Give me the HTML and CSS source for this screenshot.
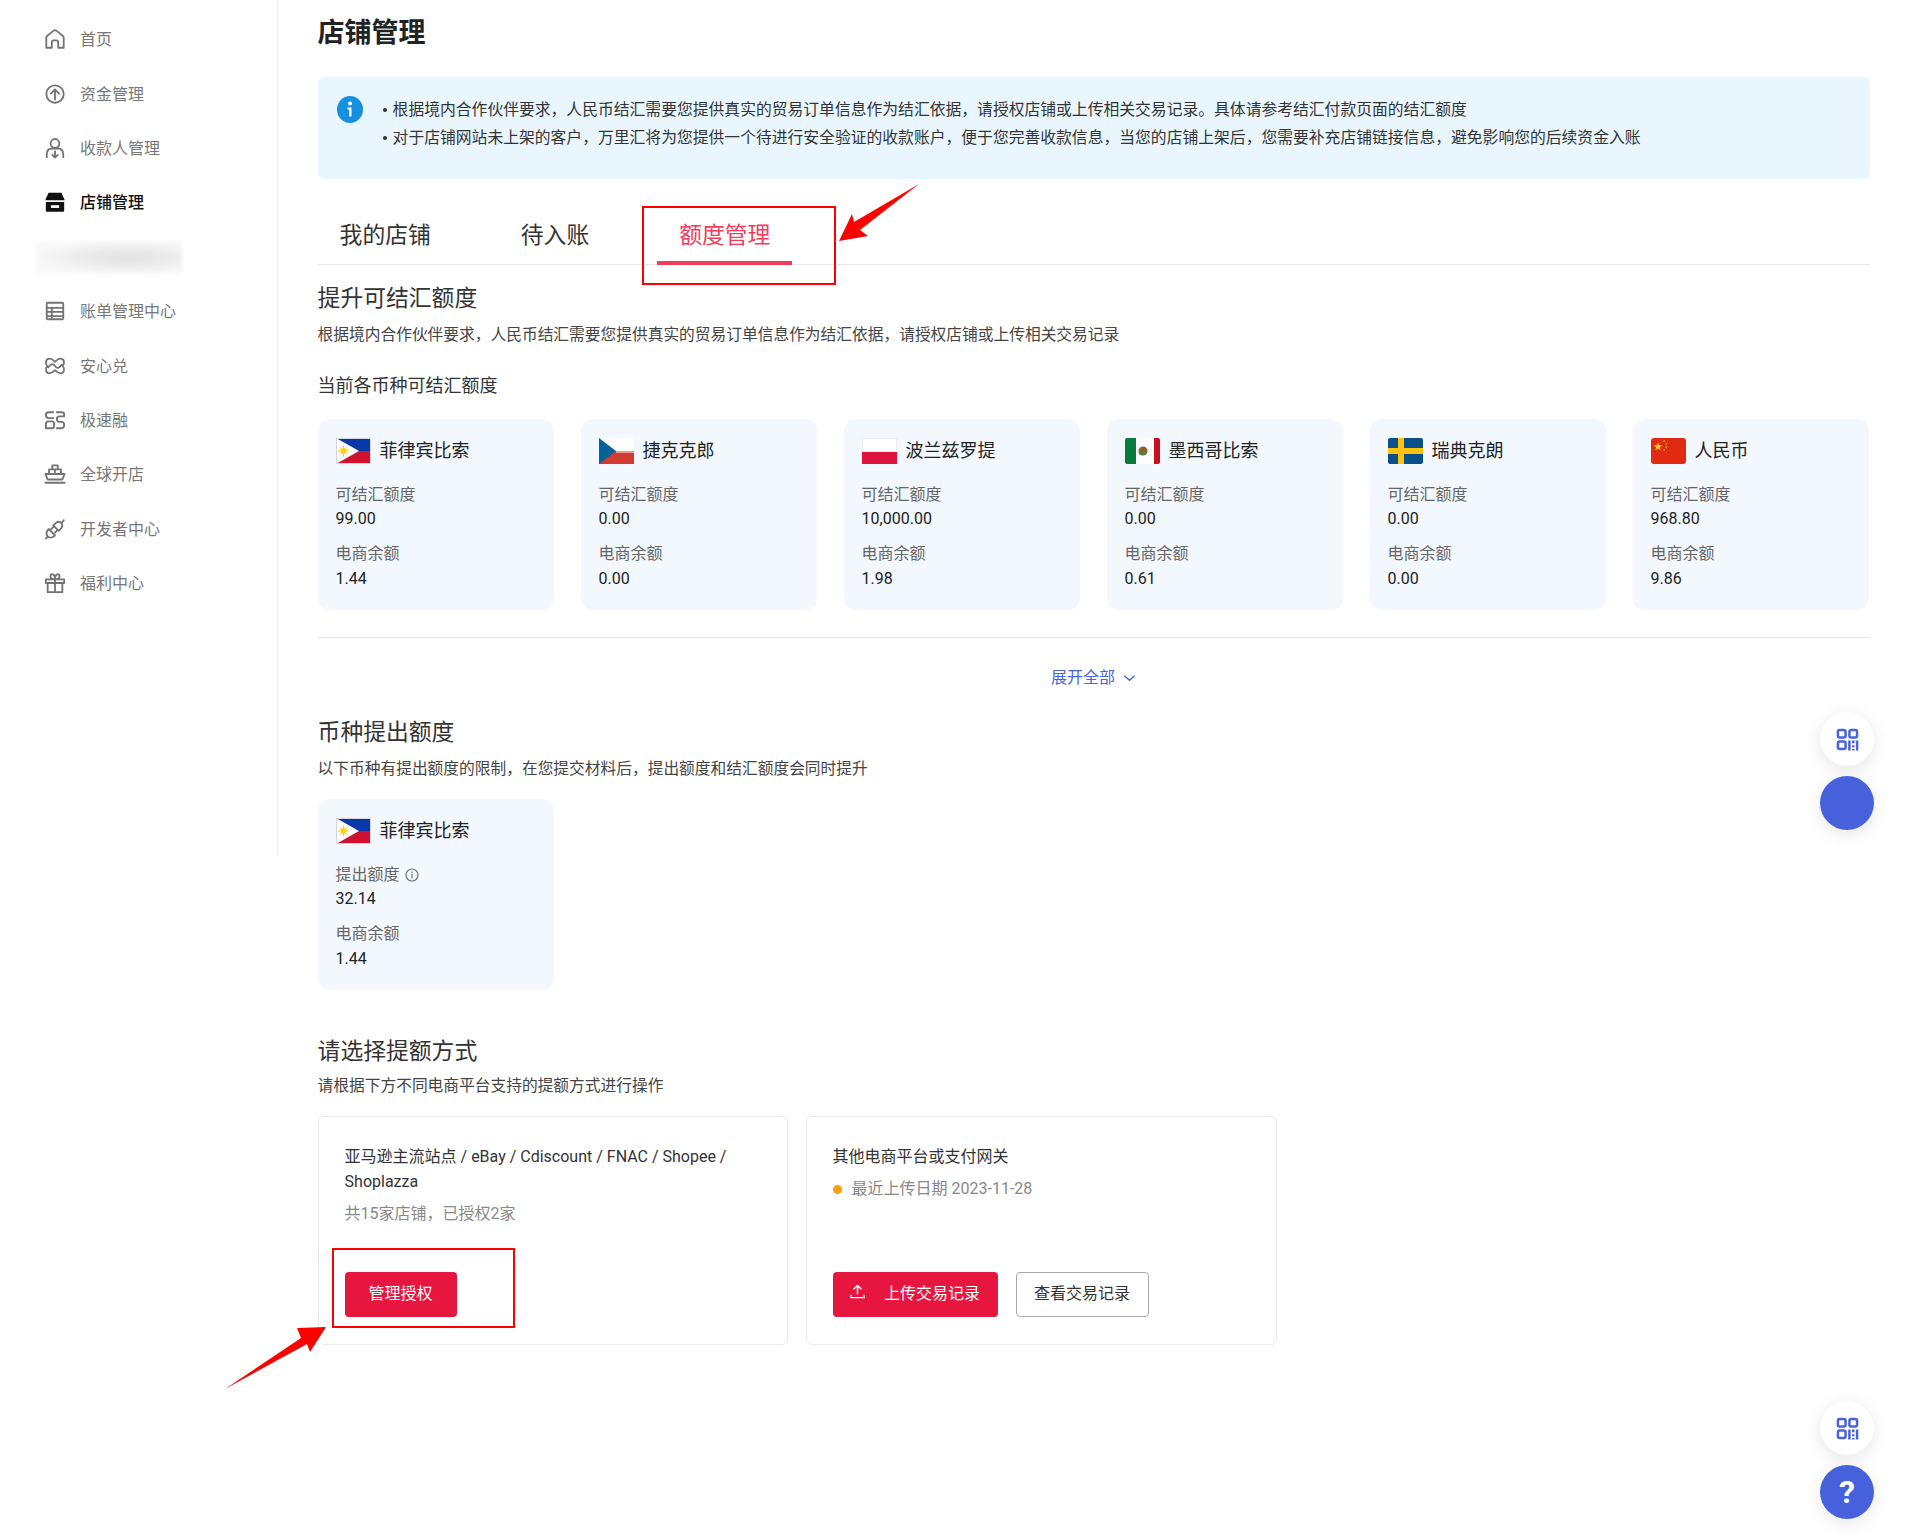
FILE: index.html
```html
<!DOCTYPE html>
<html lang="zh-CN">
<head>
<meta charset="utf-8">
<title>店铺管理</title>
<link rel="stylesheet" href="styles.css">
</head>
<body>
<svg class="defs" width="0" height="0" aria-hidden="true">
  <defs>
    <symbol id="f-ph" viewBox="0 0 35 26">
      <rect width="35" height="13" fill="#0a38a8"/><rect y="13" width="35" height="13" fill="#ce1230"/>
      <path d="M0 0 L23 13 L0 26Z" fill="#fff"/>
      <circle cx="7.5" cy="13" r="3" fill="#fcd116"/>
      <path d="M7.5 7.5V18.5M2 13H13M3.6 9.1L11.4 16.9M11.4 9.1L3.6 16.9" stroke="#fcd116" stroke-width="1"/>
      <rect x=".5" y=".5" width="34" height="25" fill="none" stroke="#d5d5dd"/>
    </symbol>
    <symbol id="f-cz" viewBox="0 0 35 26">
      <rect width="35" height="13" fill="#fff"/><rect y="13" width="35" height="13" fill="#d13b32"/>
      <path d="M0 0 L17 13 L0 26Z" fill="#04629b"/>
      <path d="M17 13H35V15H17Z" fill="#ef9a96"/>
    </symbol>
    <symbol id="f-pl" viewBox="0 0 35 26">
      <rect width="35" height="13" fill="#fff"/><rect y="13" width="35" height="13" fill="#dd143d"/>
      <rect x=".5" y=".5" width="34" height="13" fill="none" stroke="#eee"/>
    </symbol>
    <symbol id="f-mx" viewBox="0 0 35 26">
      <rect width="35" height="26" rx="2" fill="#fff"/>
      <path d="M2 0H11V26H2A2 2 0 0 1 0 24V2A2 2 0 0 1 2 0Z" fill="#087c3c"/>
      <path d="M29 0H33A2 2 0 0 1 35 2V24A2 2 0 0 1 33 26H29Z" fill="#c8101e"/>
      <circle cx="18" cy="13" r="4.6" fill="#8c6a3c"/>
      <path d="M14 12Q18 7 21 11L22 15Q18 19 14 16Z" fill="#5e7d3a"/>
      <circle cx="19" cy="11" r="2" fill="#b0492a"/>
    </symbol>
    <symbol id="f-se" viewBox="0 0 35 26">
      <rect width="35" height="26" rx="2" fill="#0b5089"/>
      <path d="M10 0H16V26H10ZM0 10H35V16H0Z" fill="#fdc20b"/>
    </symbol>
    <symbol id="f-cn" viewBox="0 0 35 26">
      <rect width="35" height="26" rx="3" fill="#e22a12"/>
      <path d="M7 4.2L8.1 7.3H11.4L8.7 9.2L9.7 12.3L7 10.4L4.3 12.3L5.3 9.2L2.6 7.3H5.9Z" fill="#fbd016"/>
      <circle cx="13.2" cy="3.4" r=".8" fill="#fbd016"/><circle cx="15.4" cy="6" r=".8" fill="#fbd016"/>
      <circle cx="15.4" cy="9.4" r=".8" fill="#fbd016"/><circle cx="13.2" cy="12" r=".8" fill="#fbd016"/>
    </symbol>
    <symbol id="qr" viewBox="0 0 24 24">
      <g fill="none" stroke="#4a63dd" stroke-width="2.600">
        <rect x="2" y="2" width="8" height="8" rx="1.800"/>
        <rect x="14" y="2" width="8" height="8" rx="1.800"/>
        <rect x="2" y="14" width="8" height="8" rx="1.800"/>
        <path d="M14 13V23.500M18 13V16M18 18V20M18 22V23.500M22 13V23.500"/>
      </g>
    </symbol>
  </defs>
</svg>

<div class="page">
  <aside class="sidebar">
    <a class="nav-item"><svg class="nav-icon" viewBox="0 0 24 24"><path d="M2.500 21.500V10.500Q2.500 9.500 3.300 8.800L10.500 2.900Q12 1.800 13.500 2.900L20.700 8.800Q21.500 9.500 21.500 10.500V21.500H15.500V15.500Q15.500 13.500 13.500 13.500H10.500Q8.500 13.500 8.500 15.500V21.500Z"/></svg><span>首页</span></a>
    <a class="nav-item"><svg class="nav-icon" viewBox="0 0 24 24"><circle cx="12" cy="12" r="9.500"/><path d="M12 18V7M7.500 11.500L12 7L16.500 11.500"/></svg><span>资金管理</span></a>
    <a class="nav-item"><svg class="nav-icon" viewBox="0 0 24 24"><circle cx="12" cy="7" r="4.800"/><path d="M3 22V19Q3 12.500 9 12.500H15Q21 12.500 21 19V22M12 15.500V22M9 19.500L12 22.500L15 19.500"/></svg><span>收款人管理</span></a>
    <a class="nav-item nav-item-active"><svg class="nav-icon-solid" viewBox="0 0 24 24"><path d="M5 2H19L22.500 9.500V10H1.500V9.500Z" fill="#111"/><path d="M2 12H22V21.500Q22 22.500 21 22.500H3Q2 22.500 2 21.500Z" fill="#111"/><rect x="7.500" y="15.500" width="9" height="3" fill="#fff"/></svg><span>店铺管理</span></a>
    <div class="nav-blur"><div class="nav-blur-inner"></div></div>
    <a class="nav-item"><svg class="nav-icon" viewBox="0 0 24 24"><rect x="3" y="3" width="18" height="18" rx="1"/><path d="M3 8.500H21M3 13H21M3 17.500H21M8.500 8.500V21"/></svg><span>账单管理中心</span></a>
    <a class="nav-item"><svg class="nav-icon" viewBox="0 0 24 24"><path d="M6 4C2 4 1 9 3.500 12C1 15 2 20 6 20C9 20 10.500 18 12 16.500C13.500 18 15 20 18 20C22 20 23 15 20.500 12C23 9 22 4 18 4C15 4 13.500 6 12 7.500C10.500 6 9 4 6 4ZM4.500 13.500C8 9 10 9 12 12C14 15 16 15 19.500 10.500"/></svg><span>安心兑</span></a>
    <a class="nav-item"><svg class="nav-icon" viewBox="0 0 24 24"><path d="M10 3.500H5Q2 3.500 2 6.500T5 10H10M2 21H9Q11 21 11 18.500V16Q11 13.500 8.500 13.500H5Q2 13.500 2 17V21M14 3.500H19Q22 3.500 22 6V8H17Q14 8 14 11T17 14H19Q22 14 22 17.500T19 21H14"/></svg><span>极速融</span></a>
    <a class="nav-item"><svg class="nav-icon" viewBox="0 0 24 24"><path d="M9 2.500H15V7H9ZM5.500 7H18.500V12H5.500ZM1.500 12H22.500L20 18H4ZM12 7V10M1.500 21.500H22.500"/></svg><span>全球开店</span></a>
    <a class="nav-item"><svg class="nav-icon" viewBox="0 0 24 24"><path d="M10 8L16 14L19 11Q21 8 19 5.500Q16.500 3 13.500 5ZM5 12L12 19L9 21Q6 22 4 20Q2 18 3 15ZM19 5.500L21.500 2.500M4 20L2 22.500M8 12L10 10M12 16L14 14"/></svg><span>开发者中心</span></a>
    <a class="nav-item"><svg class="nav-icon" viewBox="0 0 24 24"><path d="M2 8H22V12H2ZM4 12V22H20V12M12 8V22M12 8Q7 8 7 5T9.500 2.500Q12 3 12 8ZM12 8Q17 8 17 5T14.500 2.500Q12 3 12 8Z"/></svg><span>福利中心</span></a>
  </aside>

  <main class="main">
    <h1 class="page-title">店铺管理</h1>

    <div class="alert">
      <svg class="alert-icon" viewBox="0 0 26 27"><ellipse cx="13" cy="13.500" rx="13" ry="13.500" fill="#1590e0"/><circle cx="13" cy="7.500" r="2" fill="#fff"/><path d="M10.500 11.500H14.500V20.500H12.200V13.500H10.500Z" fill="#fff"/></svg>
      <ul class="alert-list">
        <li>根据境内合作伙伴要求，人民币结汇需要您提供真实的贸易订单信息作为结汇依据，请授权店铺或上传相关交易记录。具体请参考结汇付款页面的结汇额度</li>
        <li>对于店铺网站未上架的客户，万里汇将为您提供一个待进行安全验证的收款账户，便于您完善收款信息，当您的店铺上架后，您需要补充店铺链接信息，避免影响您的后续资金入账</li>
      </ul>
    </div>

    <nav class="tabs">
      <a class="tab">我的店铺</a>
      <a class="tab">待入账</a>
      <a class="tab tab-active">额度管理</a>
    </nav>

    <h2 class="section-title">提升可结汇额度</h2>
    <p class="section-desc">根据境内合作伙伴要求，人民币结汇需要您提供真实的贸易订单信息作为结汇依据，请授权店铺或上传相关交易记录</p>
    <h3 class="sub-title">当前各币种可结汇额度</h3>

    <div class="currency-grid">
      <div class="currency-card">
        <div class="currency-head"><svg class="flag"><use href="#f-ph"/></svg><span>菲律宾比索</span></div>
        <div class="label label-first">可结汇额度</div><div class="value">99.00</div>
        <div class="label">电商余额</div><div class="value value-last">1.44</div>
      </div>
      <div class="currency-card">
        <div class="currency-head"><svg class="flag"><use href="#f-cz"/></svg><span>捷克克郎</span></div>
        <div class="label label-first">可结汇额度</div><div class="value">0.00</div>
        <div class="label">电商余额</div><div class="value value-last">0.00</div>
      </div>
      <div class="currency-card">
        <div class="currency-head"><svg class="flag"><use href="#f-pl"/></svg><span>波兰兹罗提</span></div>
        <div class="label label-first">可结汇额度</div><div class="value">10,000.00</div>
        <div class="label">电商余额</div><div class="value value-last">1.98</div>
      </div>
      <div class="currency-card">
        <div class="currency-head"><svg class="flag"><use href="#f-mx"/></svg><span>墨西哥比索</span></div>
        <div class="label label-first">可结汇额度</div><div class="value">0.00</div>
        <div class="label">电商余额</div><div class="value value-last">0.61</div>
      </div>
      <div class="currency-card">
        <div class="currency-head"><svg class="flag"><use href="#f-se"/></svg><span>瑞典克朗</span></div>
        <div class="label label-first">可结汇额度</div><div class="value">0.00</div>
        <div class="label">电商余额</div><div class="value value-last">0.00</div>
      </div>
      <div class="currency-card">
        <div class="currency-head"><svg class="flag"><use href="#f-cn"/></svg><span>人民币</span></div>
        <div class="label label-first">可结汇额度</div><div class="value">968.80</div>
        <div class="label">电商余额</div><div class="value value-last">9.86</div>
      </div>
    </div>

    <div class="rule"></div>
    <a class="expand">展开全部<svg class="expand-icon" viewBox="0 0 14 8"><path d="M1.500 1.500L7 6.500L12.500 1.500"/></svg></a>

    <h2 class="section-title section-second">币种提出额度</h2>
    <p class="section-desc">以下币种有提出额度的限制，在您提交材料后，提出额度和结汇额度会同时提升</p>
    <div class="currency-single">
      <div class="currency-card">
        <div class="currency-head"><svg class="flag"><use href="#f-ph"/></svg><span>菲律宾比索</span></div>
        <div class="label label-first">提出额度<svg class="info-icon" viewBox="0 0 14 14"><circle cx="7" cy="7" r="6"/><path d="M7 6V10.500M7 3.500V5"/></svg></div><div class="value">32.14</div>
        <div class="label">电商余额</div><div class="value value-last">1.44</div>
      </div>
    </div>

    <h2 class="section-title section-third">请选择提额方式</h2>
    <p class="section-desc section-desc-tight">请根据下方不同电商平台支持的提额方式进行操作</p>
    <div class="method-row">
      <div class="method-card">
        <div class="method-title">亚马逊主流站点 / eBay / Cdiscount / FNAC / Shopee / Shoplazza</div>
        <div class="method-sub">共15家店铺，已授权2家</div>
        <div class="method-actions"><a class="btn btn-primary btn-manage">管理授权</a></div>
      </div>
      <div class="method-card">
        <div class="method-title">其他电商平台或支付网关</div>
        <div class="method-sub method-date"><i class="dot"></i>最近上传日期 2023-11-28</div>
        <div class="method-actions">
          <a class="btn btn-primary btn-upload"><svg class="upload-icon" viewBox="0 0 16 16"><path d="M8 11V1.500M3.800 5.500L8 1.500L12.200 5.500M1 11.500V14.500H15V11.500"/></svg>上传交易记录</a>
          <a class="btn btn-outline">查看交易记录</a>
        </div>
      </div>
    </div>
  </main>

  <div class="annot-box annot-box-tab"></div>
  <div class="annot-box annot-box-btn"></div>
  <svg class="annot-layer" viewBox="0 0 1908 1540">
    <path d="M919 184L860 230L868 236L839 241L852 214L854 222Z" fill="#f00"/>
    <path d="M225 1389L301 1338L297 1328L326 1327L310 1352L307 1344Z" fill="#f00"/>
  </svg>

  <div class="fab fab-white fab-a"><svg class="fab-qr"><use href="#qr"/></svg></div>
  <div class="fab fab-blue fab-b"></div>
  <div class="fab fab-white fab-c"><svg class="fab-qr"><use href="#qr"/></svg></div>
  <div class="fab fab-blue fab-d">?</div>
</div>
</body>
</html>
```
FILE: styles.css
```css
* { box-sizing: border-box; }
html, body { margin: 0; padding: 0; background: #fff; }
body {
  font-family: Roboto, "Noto Sans CJK SC", sans-serif;
  font-size: 16px;
  color: #333;
}
a { color: inherit; text-decoration: none; }
.defs { position: absolute; }

.page {
  position: relative;
  width: 1908px;
  height: 1540px;
  overflow: hidden;
  display: flex;
  align-items: flex-start;
}

/* sidebar */
.sidebar {
  width: 278px;
  height: 856px;
  flex: none;
  padding-top: 12px;
  border-right: 1px solid #eff0f2;
}
.nav-item {
  display: flex;
  align-items: center;
  height: 54.4px;
  padding-left: 44px;
  color: #777;
}
.nav-item span { margin-bottom: 2px; }
.nav-icon, .nav-icon-solid {
  width: 22px;
  height: 22px;
  margin-right: 14px;
  flex: none;
}
.nav-icon {
  fill: none;
  stroke: #737373;
  stroke-width: 2;
  stroke-linejoin: round;
  stroke-linecap: round;
}
.nav-item-active { color: #111; font-weight: 500; }
.nav-blur {
  height: 54.4px;
  padding: 11px 0 0 36px;
}
.nav-blur-inner {
  width: 146px;
  height: 33px;
  background: radial-gradient(ellipse farthest-side at 62% 50%, #e3e3e3 0%, #ebebeb 50%, #f3f3f3 80%, #f8f8f8 100%);
  filter: blur(2px);
}

/* main */
.main {
  width: 1592px;
  flex: none;
  padding-left: 39.6px;
  padding-top: 13px;
}
.page-title {
  margin: 0 0 24px;
  font-size: 27px;
  line-height: 40px;
  font-weight: 700;
  color: #222;
}
.alert {
  display: flex;
  height: 102px;
  padding: 19px 0 0 19px;
  background: #e9f6fe;
  border-radius: 6px;
}
.alert-icon {
  width: 26px;
  height: 27px;
  margin-right: 20px;
  flex: none;
}
.alert-list {
  list-style: none;
  margin: 0;
  padding: 0;
  color: #333;
  font-size: 15.8px;
  line-height: 28px;
}
.alert-list li {
  position: relative;
  padding-left: 10px;
  white-space: nowrap;
}
.alert-list li::before {
  content: "";
  position: absolute;
  left: 0;
  top: 12px;
  width: 4px;
  height: 4px;
  border-radius: 50%;
  background: #333;
}

.tabs {
  display: flex;
  gap: 46px;
  height: 58px;
  margin-top: 27px;
  border-bottom: 1px solid #e6e6e6;
  box-sizing: content-box;
}
.tab {
  position: relative;
  display: block;
  height: 58px;
  padding: 0 22px;
  font-size: 22.8px;
  line-height: 60px;
  color: #333;
}
.tab-active { color: #f23b5d; }
.tab-active::after {
  content: "";
  position: absolute;
  left: 0;
  right: 0;
  bottom: -1px;
  height: 4px;
  background: #f23b5d;
}

.section-title {
  margin: 18px 0 0;
  font-size: 22.8px;
  line-height: 31px;
  font-weight: 400;
  color: #333;
}
.section-second { margin-top: 27px; }
.section-third { margin-top: 46px; }
.section-desc {
  margin: 9px 0 0;
  font-size: 15.72px;
  line-height: 24px;
  color: #444;
}
.section-desc-tight { margin-top: 7px; }
.sub-title {
  margin: 25px 0 0;
  font-size: 18px;
  line-height: 28px;
  font-weight: 400;
  color: #333;
}

.currency-grid {
  display: grid;
  grid-template-columns: repeat(6, 236px);
  column-gap: 27px;
  margin-top: 19px;
}
.currency-single { margin-top: 18px; width: 236px; }
.currency-card {
  height: 191px;
  padding: 19px 18px 0;
  background: #f3f8ff;
  border-radius: 12px;
}
.currency-head {
  display: flex;
  align-items: center;
  height: 26px;
  font-size: 18px;
  color: #222;
}
.currency-head span { margin-bottom: 4px; }
.flag {
  width: 35px;
  height: 26px;
  margin-right: 9px;
  flex: none;
}
.label {
  display: flex;
  align-items: center;
  margin-top: 11px;
  line-height: 24px;
  color: #666;
}
.label-first { margin-top: 19px; }
.value {
  line-height: 24px;
  color: #222;
}
.value-last { margin-top: 1px; }
.info-icon {
  width: 14px;
  height: 14px;
  margin-left: 5px;
  fill: none;
  stroke: #777;
  stroke-width: 1.200;
}

.rule {
  height: 1px;
  margin-top: 27px;
  width: 1552px;
  background: #e6e6e6;
}
.expand {
  display: flex;
  align-items: center;
  justify-content: center;
  width: 1552px;
  margin-top: 28px;
  line-height: 24px;
  color: #4a63dd;
}
.expand-icon {
  width: 13px;
  height: 8px;
  margin-left: 8px;
  fill: none;
  stroke: #4a63dd;
  stroke-width: 1.500;
}

.method-row {
  display: grid;
  grid-template-columns: 470px 471px;
  column-gap: 18px;
  margin-top: 18px;
}
.method-card {
  display: flex;
  flex-direction: column;
  height: 229px;
  padding: 27px 26px 27px;
  border: 1px solid #ececec;
  border-radius: 6px;
}
.method-title {
  line-height: 25px;
  color: #333;
}
.method-sub {
  margin-top: 8px;
  line-height: 24px;
  color: #888;
}
.method-date {
  display: flex;
  align-items: center;
}
.dot {
  width: 9px;
  height: 9px;
  margin-right: 10px;
  border-radius: 50%;
  background: #f5a016;
}
.method-actions {
  display: flex;
  gap: 18px;
  margin-top: auto;
}
.btn {
  display: flex;
  align-items: center;
  justify-content: center;
  height: 45px;
  padding-bottom: 6px;
  border-radius: 4px;
}
.btn-primary { background: #e6163e; color: #fff; }
.btn-manage { width: 112px; }
.btn-upload { width: 165px; }
.btn-outline {
  width: 133px;
  border: 1px solid #aaa;
  color: #333;
}
.upload-icon {
  width: 15px;
  height: 15px;
  margin-right: 19px;
  fill: none;
  stroke: #fff;
  stroke-width: 1.500;
}

/* annotations over the page */
.annot-box {
  position: absolute;
  border: 2px solid #f00;
}
.annot-box-tab { left: 642px; top: 206px; width: 194px; height: 79px; }
.annot-box-btn { left: 332px; top: 1248px; width: 183px; height: 80px; }
.annot-layer {
  position: absolute;
  left: 0;
  top: 0;
  width: 1908px;
  height: 1540px;
  pointer-events: none;
}

/* floating buttons */
.fab {
  position: absolute;
  left: 1820px;
  display: flex;
  align-items: center;
  justify-content: center;
  width: 54px;
  height: 54px;
  border-radius: 50%;
  box-shadow: 0 4px 18px rgba(0, 0, 0, .1);
}
.fab-white { background: #fff; }
.fab-blue {
  background: #4761dc;
  color: #fff;
  font-size: 32px;
  font-weight: 700;
}
.fab-a { top: 712px; }
.fab-b { top: 776px; }
.fab-c { top: 1401px; }
.fab-d { top: 1465px; }
.fab-qr { width: 23px; height: 23px; }
```
